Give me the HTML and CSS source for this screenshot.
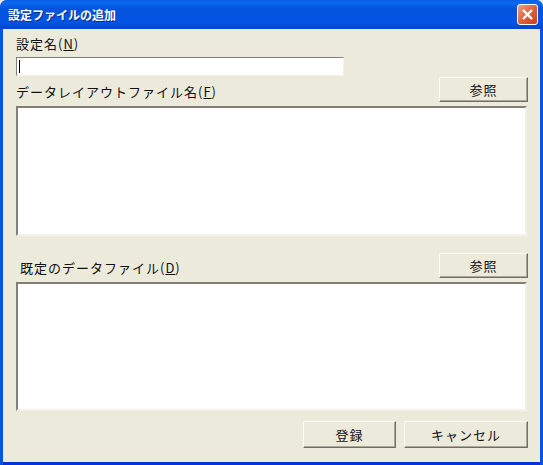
FILE: index.html
```html
<!DOCTYPE html>
<html lang="ja">
<head>
  <meta charset="UTF-8">
  <title>設定ファイルの追加</title>
  <link rel="stylesheet" href="styles.css">
</head>
<body>
  <div class="window">
    <div class="titlebar">
      <span class="title">設定ファイルの追加</span>
      <button class="close">
        <svg width="13" height="13" viewBox="0 0 13 13">
          <path d="M2 2 L11 11 M11 2 L2 11" stroke="#fff" stroke-width="2.4" fill="none"/>
        </svg>
      </button>
    </div>
    <div class="client">
      <label class="label first">設定名(<u>N</u>)</label>
      <div class="input"><span class="caret"></span></div>
      <div class="label-row">
        <label class="label">データレイアウトファイル名(<u>F</u>)</label>
        <button class="btn browse">参照</button>
      </div>
      <div class="textbox"></div>
      <div class="label-row second">
        <label class="label indent">既定のデータファイル(<u>D</u>)</label>
        <button class="btn browse">参照</button>
      </div>
      <div class="textbox short"></div>
      <div class="actions">
        <button class="btn ok">登録</button>
        <button class="btn cancel">キャンセル</button>
      </div>
    </div>
  </div>
</body>
</html>
```

FILE: styles.css
```css
* {
  box-sizing: border-box;
}

body {
  margin: 0;
  background: #eceadb;
  font-family: "Noto Sans CJK JP", "Liberation Sans", sans-serif;
  font-size: 13px;
  color: #111;
}

.window {
  width: 543px;
  height: 465px;
  display: flex;
  flex-direction: column;
  background: #0855dd;
  border-radius: 7px 7px 0 0;
  overflow: hidden;
}

.titlebar {
  height: 29px;
  flex: none;
  display: flex;
  align-items: center;
  justify-content: space-between;
  padding: 0 5px 0 8px;
  background: linear-gradient(#0a5ee6 0, #0a6af0 10%, #0453dd 30%, #0355e4 75%, #0246c8 100%);
}

.title {
  color: #fff;
  font-size: 12px;
  font-weight: bold;
  text-shadow: 1px 1px 0 #0a2a8c;
}

.close {
  width: 21px;
  height: 21px;
  padding: 0;
  display: flex;
  align-items: center;
  justify-content: center;
  border: 1px solid #fff;
  border-radius: 3px;
  background: linear-gradient(135deg, #f0a08a, #e2603a 50%, #c83e1c);
}

.client {
  flex: 1;
  margin: 0 3px 0 3px;
  padding: 5px 12px 0 13px;
  display: flex;
  flex-direction: column;
  background: #eceadb;
  border-bottom: 3px solid #0831d9;
}

.label {
  font-size: 13px;
  line-height: 20px;
  letter-spacing: 1px;
}

.first {
  height: 23px;
}

.input {
  width: 328px;
  height: 19px;
  padding: 2px 2px;
  background: #fff;
  border: 1px solid;
  border-color: #808078 #f4f2e8 #f4f2e8 #808078;
}

.caret {
  display: block;
  width: 1px;
  height: 13px;
  background: #000;
}

.label-row {
  height: 30px;
  display: flex;
  justify-content: space-between;
  padding-top: 1px;
}

.label-row .label {
  margin-top: 5px;
}

.second {
  height: 46px;
  align-items: flex-end;
  padding: 0 0 4px 0;
}

.second .label {
  margin: 0;
}

.indent {
  margin-left: 4px !important;
}

.textbox {
  width: 511px;
  height: 130px;
  flex: none;
  background: #fff;
  border: 2px solid;
  border-color: #808078 #f4f2e8 #f4f2e8 #808078;
}

.short {
  height: 129px;
}

.btn {
  height: 25px;
  padding: 0;
  font-family: inherit;
  font-size: 13px;
  letter-spacing: 1px;
  color: #111;
  background: #eceadb;
  border: 1px solid;
  border-color: #fbfaf4 #6f6e64 #6f6e64 #fbfaf4;
  box-shadow: inset -1px -1px 0 #aca899;
}

.browse {
  width: 89px;
}

.actions {
  margin-top: 10px;
  display: flex;
  justify-content: flex-end;
  gap: 8px;
}

.ok,
.cancel {
  height: 27px;
}

.ok {
  width: 93px;
}

.cancel {
  width: 124px;
}
```
